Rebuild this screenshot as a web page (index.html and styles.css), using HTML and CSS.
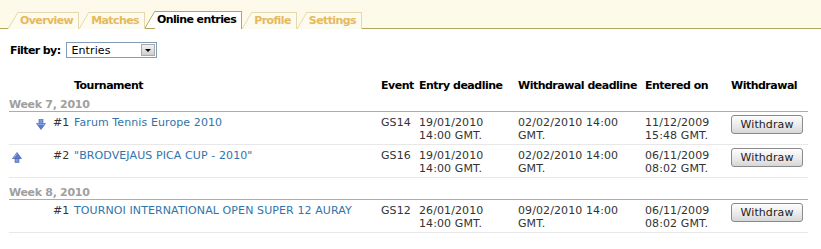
FILE: index.html
```html
<!DOCTYPE html>
<html lang="en">
  <head>
    <meta charset="UTF-8" />
    <title>Online entries</title>
    <link rel="stylesheet" href="styles.css">
  </head>
  <body>
    <div class="top">
      <div class="date">17 December 2009 11:12</div>
      <ul class="tabs">
        <li><a href="#">Overview</a></li>
        <li><a href="#">Matches</a></li>
        <li class="active"><a href="#">Online entries</a></li>
        <li><a href="#">Profile</a></li>
        <li><a href="#">Settings</a></li>
      </ul>
    </div>

    <div class="filter">
      <label>Filter by:</label>
      <div class="select">
        <span class="select-text">Entries</span>
        <span class="select-btn"><i></i></span>
      </div>
    </div>

    <table class="entries">
      <colgroup>
        <col class="c-up" />
        <col class="c-down" />
        <col class="c-num" />
        <col class="c-name" />
        <col class="c-event" />
        <col class="c-entry" />
        <col class="c-wd" />
        <col class="c-on" />
        <col class="c-btn" />
      </colgroup>
      <thead>
        <tr>
          <th></th>
          <th></th>
          <th></th>
          <th>Tournament</th>
          <th>Event</th>
          <th>Entry deadline</th>
          <th>Withdrawal deadline</th>
          <th>Entered on</th>
          <th>Withdrawal</th>
        </tr>
      </thead>
      <tbody>
        <tr class="week first"><td colspan="9">Week 7, 2010</td></tr>
        <tr>
          <td></td>
          <td>
            <svg class="arrow" width="10" height="11" viewBox="0 0 10 11">
              <rect x="3" y="0.5" width="4" height="4" fill="#7b98dc" stroke="#3f5fb0" stroke-width="0.6" />
              <polygon points="0.5,4.5 9.5,4.5 5,10.5" fill="#5a7ccf" stroke="#3656a8" stroke-width="0.6" />
              <line x1="1.5" y1="5.2" x2="8.5" y2="5.2" stroke="#b9c9ee" stroke-width="0.8" />
            </svg>
          </td>
          <td>#1</td>
          <td><a href="#">Farum Tennis Europe 2010</a></td>
          <td>GS14</td>
          <td>19/01/2010<br>14:00 GMT.</td>
          <td>02/02/2010 14:00<br>GMT.</td>
          <td>11/12/2009<br>15:48 GMT.</td>
          <td><button>Withdraw</button></td>
        </tr>
        <tr>
          <td>
            <svg class="arrow" width="10" height="11" viewBox="0 0 10 11">
              <polygon points="5,0.5 9.5,6.5 0.5,6.5" fill="#5a7ccf" stroke="#3656a8" stroke-width="0.6" />
              <rect x="3" y="6.5" width="4" height="4" fill="#7b98dc" stroke="#3f5fb0" stroke-width="0.6" />
              <line x1="5" y1="1.5" x2="1.8" y2="5.8" stroke="#b9c9ee" stroke-width="0.8" />
            </svg>
          </td>
          <td></td>
          <td>#2</td>
          <td><a href="#">"BRODVEJAUS PICA CUP - 2010"</a></td>
          <td>GS16</td>
          <td>19/01/2010<br>14:00 GMT.</td>
          <td>02/02/2010 14:00<br>GMT.</td>
          <td>06/11/2009<br>08:02 GMT.</td>
          <td><button>Withdraw</button></td>
        </tr>
        <tr class="week"><td colspan="9">Week 8, 2010</td></tr>
        <tr>
          <td></td>
          <td></td>
          <td>#1</td>
          <td><a href="#">TOURNOI INTERNATIONAL OPEN SUPER 12 AURAY</a></td>
          <td>GS12</td>
          <td>26/01/2010<br>14:00 GMT.</td>
          <td>09/02/2010 14:00<br>GMT.</td>
          <td>06/11/2009<br>08:02 GMT.</td>
          <td><button>Withdraw</button></td>
        </tr>
      </tbody>
    </table>
  </body>
</html>
```

FILE: styles.css
```css
* {
  box-sizing: border-box;
}

body {
  margin: 0;
  font-family: "DejaVu Sans", Verdana, sans-serif;
  font-size: 11px;
  letter-spacing: 0.1px;
  color: #333;
  background: #fff;
  overflow: hidden;
}

/* top bar */
.top {
  background: linear-gradient(#fcf9ee, #fdfae6);
  border-bottom: 1px solid #b4a55e;
}

.date {
  margin-top: -11px;
  padding-left: 40px;
  font-size: 12px;
  line-height: 14px;
  color: #c4c0b4;
}

.tabs {
  margin: 8px 0 0 0;
  padding: 0 0 0 8px;
  list-style: none;
  display: flex;
  align-items: flex-end;
}

.tabs li {
  --line: #e4d9ae;
  --fill: #fdfaf0;
  height: 17px;
  margin-bottom: -1px;
  padding: 0 5px 0 12px;
  border-right: 1px solid var(--line);
  background:
    linear-gradient(to bottom right, transparent calc(50% - 0.8px), var(--line) 50%, transparent calc(50% + 0.8px)) 0 0 / 10px 17px no-repeat,
    linear-gradient(var(--line), var(--line)) 10px 0 / 100% 1px no-repeat,
    linear-gradient(to bottom right, transparent 50%, var(--fill) 50%) 0 0 / 10px 17px no-repeat,
    linear-gradient(var(--fill), var(--fill)) 10px 0 / 100% 100% no-repeat;
}

.tabs li a {
  display: block;
  line-height: 18px;
  font-weight: bold;
  letter-spacing: -0.6px;
  color: #e6b95a;
  text-decoration: none;
}

.tabs li.active {
  --line: #b4a55e;
  --fill: #fff;
  height: 18px;
}

.tabs li.active a {
  color: #000;
}

/* filter */
.filter {
  display: flex;
  align-items: center;
  margin: 13px 0 0 10px;
  height: 16px;
}

.filter label {
  font-weight: bold;
  letter-spacing: -0.6px;
  color: #000;
  margin-right: 6px;
}

.select {
  width: 91px;
  height: 16px;
  border: 1px solid #7f9db9;
  display: flex;
  align-items: center;
  justify-content: space-between;
  padding: 0 1px 0 4px;
  color: #000;
}

.select-btn {
  width: 14px;
  height: 12px;
  background: linear-gradient(#f2f2f2, #cfcfcf);
  border: 1px solid #a9a9a9;
  display: flex;
  align-items: center;
  justify-content: center;
}

.select-btn i {
  width: 0;
  height: 0;
  border-left: 3px solid transparent;
  border-right: 3px solid transparent;
  border-top: 3px solid #000;
}

/* table */
.entries {
  margin: 21px 0 0 9px;
  width: 799px;
  table-layout: fixed;
  border-collapse: collapse;
}

.c-up { width: 24px; }
.c-down { width: 17px; }
.c-num { width: 21px; }
.c-name { width: 307px; }
.c-event { width: 38px; }
.c-entry { width: 99px; }
.c-wd { width: 127px; }
.c-on { width: 86px; }
.c-btn { width: 80px; }

.entries th {
  text-align: left;
  font-weight: bold;
  letter-spacing: -0.5px;
  color: #000;
  padding: 0 3px;
  line-height: 13px;
  white-space: nowrap;
}

.entries td {
  padding: 4px 3px 2px 3px;
  line-height: 13px;
  vertical-align: top;
  border-bottom: 1px solid #e8e8e8;
  white-space: nowrap;
}

.entries tr.week td {
  padding: 8px 0 0 0;
  font-weight: bold;
  letter-spacing: -0.3px;
  color: #a0a0a0;
  border-bottom: 1px solid #acacac;
}

.entries tr.week.first td {
  padding-top: 6px;
}

.entries a {
  color: #2f74aa;
  text-decoration: none;
}

.arrow {
  display: block;
  margin-top: 3px;
}

.entries button {
  display: block;
  width: 72px;
  height: 19px;
  margin-top: -1px;
  padding: 0;
  font-family: "DejaVu Sans", Verdana, sans-serif;
  font-size: 11px;
  letter-spacing: 0.1px;
  color: #222;
  background: linear-gradient(#fdfdfd, #e9e9e9 60%, #d6d6d6);
  border: 1px solid #8a8a8a;
  border-radius: 3px;
  cursor: pointer;
}
```
